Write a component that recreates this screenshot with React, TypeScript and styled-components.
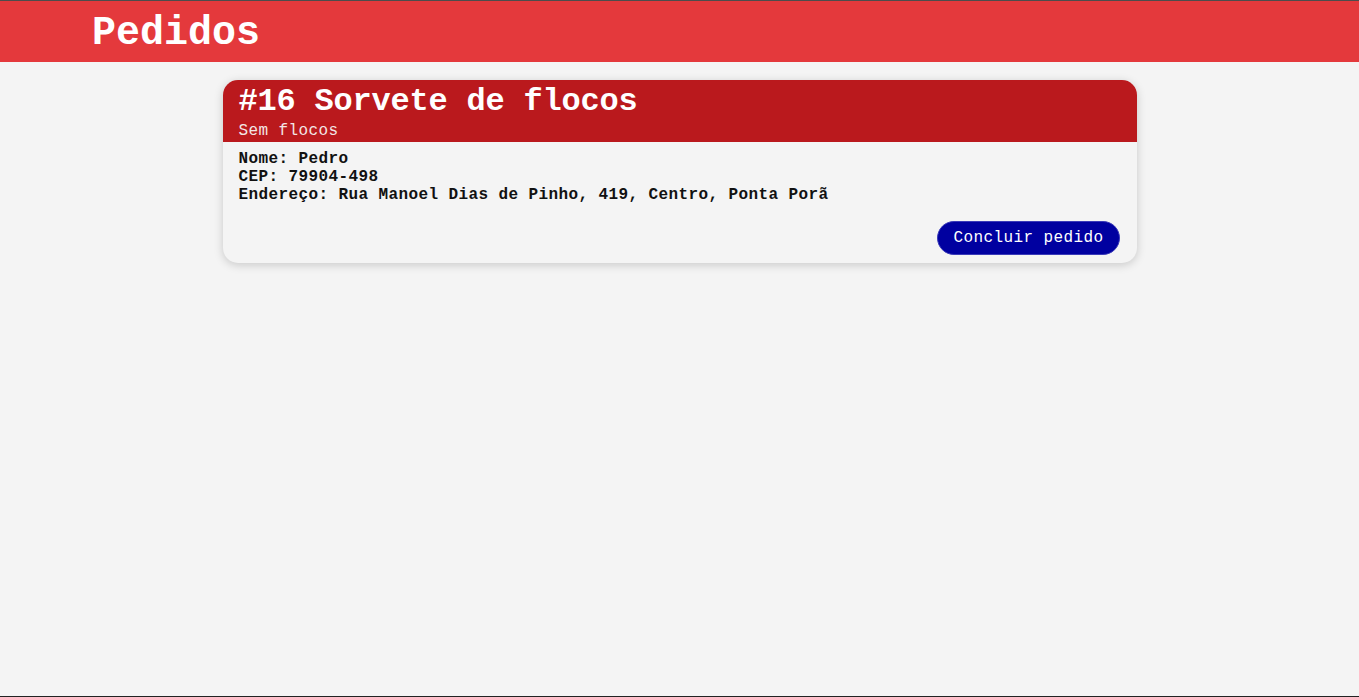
import React from "react";
import styled, { createGlobalStyle } from "styled-components";

const GlobalStyle = createGlobalStyle`
  html, body {
    margin: 0;
    padding: 0;
    background: #f4f4f4;
  }
  body {
    font-family: "Liberation Mono", "Courier New", monospace;
  }
  * { box-sizing: border-box; }
`;

const Page = styled.div`
  min-height: 100vh;
  border-top: 1px solid #4c4c4c;
  border-bottom: 1px solid #222;
  background: #f4f4f4;
`;

const TopBar = styled.header`
  height: 61px;
  background: #e4393c;
  padding: 10px 0 0 92px;
`;

const PageTitle = styled.h1`
  margin: 0;
  font-size: 40px;
  line-height: 46px;
  font-weight: bold;
  color: #ffffff;
`;

const Main = styled.main`
  display: flex;
  flex-direction: column;
  align-items: center;
  padding-top: 18px;
`;

const Card = styled.article`
  width: 914px;
  border-radius: 15px;
  background: #f4f4f4;
  box-shadow: 0 2px 10px rgba(0, 0, 0, 0.18);
  overflow: hidden;
`;

const CardHeader = styled.div`
  background: #ba191d;
  padding: 4px 16px 2px;
  display: flex;
  flex-direction: column;
  gap: 2px;
  height: 62px;
`;

const OrderTitle = styled.h2`
  margin: 0;
  font-size: 32px;
  line-height: 36px;
  font-weight: bold;
  color: #ffffff;
  letter-spacing: -0.2px;
`;

const Note = styled.p`
  margin: 0;
  font-size: 16px;
  line-height: 18px;
  color: #f3e6e6;
  letter-spacing: 0.4px;
`;

const CardBody = styled.div`
  padding: 8px 17px 8px 16px;
  display: flex;
  flex-direction: column;
  gap: 17px;
`;

const InfoList = styled.div`
  display: flex;
  flex-direction: column;
`;

const InfoLine = styled.div`
  font-size: 16px;
  line-height: 18px;
  font-weight: bold;
  color: #111;
  letter-spacing: 0.4px;
  white-space: nowrap;
`;

const Actions = styled.div`
  display: flex;
  justify-content: flex-end;
`;

const DoneButton = styled.button`
  height: 34px;
  padding: 0 15px;
  border-radius: 17px;
  border: 1px solid #3a3ab8;
  background: #0000a0;
  color: #ffffff;
  font-family: "Liberation Mono", "Courier New", monospace;
  font-size: 16px;
  line-height: 18px;
  letter-spacing: 0.4px;
  cursor: pointer;
`;

export default function App() {
  return (
    <>
      <GlobalStyle />
      <Page>
        <TopBar>
          <PageTitle>Pedidos</PageTitle>
        </TopBar>
        <Main>
          <Card>
            <CardHeader>
              <OrderTitle>#16 Sorvete de flocos</OrderTitle>
              <Note>Sem flocos</Note>
            </CardHeader>
            <CardBody>
              <InfoList>
                <InfoLine>Nome: Pedro</InfoLine>
                <InfoLine>CEP: 79904-498</InfoLine>
                <InfoLine>Endereço: Rua Manoel Dias de Pinho, 419, Centro, Ponta Porã</InfoLine>
              </InfoList>
              <Actions>
                <DoneButton>Concluir pedido</DoneButton>
              </Actions>
            </CardBody>
          </Card>
        </Main>
      </Page>
    </>
  );
}
